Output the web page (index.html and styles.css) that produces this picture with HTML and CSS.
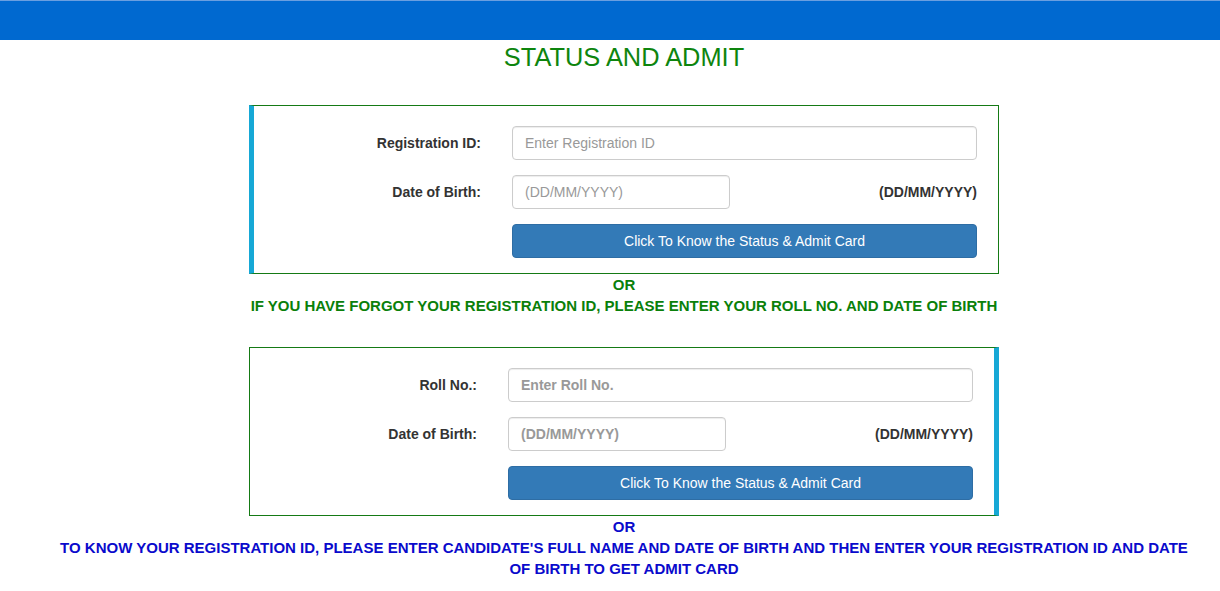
FILE: index.html
```html
<!DOCTYPE html>
<html>
<head>
<meta charset="utf-8">
<title>Status and Admit</title>
<link rel="stylesheet" href="styles.css">
</head>
<body>
<header class="topbar"></header>
<main class="container">
  <h1 class="title">STATUS AND ADMIT</h1>

  <section class="panel panel-left">
    <div class="row">
      <label class="label">Registration ID:</label>
      <input class="field" type="text" placeholder="Enter Registration ID">
    </div>
    <div class="row">
      <label class="label">Date of Birth:</label>
      <div class="date-line">
        <input class="field date" type="text" placeholder="(DD/MM/YYYY)">
        <span class="hint">(DD/MM/YYYY)</span>
      </div>
    </div>
    <div class="row">
      <span></span>
      <button class="btn">Click To Know the Status &amp; Admit Card</button>
    </div>
  </section>

  <div class="note green">
    <div>OR</div>
    <div>IF YOU HAVE FORGOT YOUR REGISTRATION ID, PLEASE ENTER YOUR ROLL NO. AND DATE OF BIRTH</div>
  </div>

  <section class="panel panel-right">
    <div class="row">
      <label class="label">Roll No.:</label>
      <input class="field bold-ph" type="text" placeholder="Enter Roll No.">
    </div>
    <div class="row">
      <label class="label">Date of Birth:</label>
      <div class="date-line">
        <input class="field date bold-ph" type="text" placeholder="(DD/MM/YYYY)">
        <span class="hint">(DD/MM/YYYY)</span>
      </div>
    </div>
    <div class="row">
      <span></span>
      <button class="btn">Click To Know the Status &amp; Admit Card</button>
    </div>
  </section>

  <div class="note blue">
    <div>OR</div>
    <div>TO KNOW YOUR REGISTRATION ID, PLEASE ENTER CANDIDATE'S FULL NAME AND DATE OF BIRTH AND THEN ENTER YOUR REGISTRATION ID AND DATE OF BIRTH TO GET ADMIT CARD</div>
  </div>
</main>
</body>
</html>
```

FILE: styles.css
```css
* { box-sizing: border-box; }
html, body { margin: 0; padding: 0; background: #fff; }
body {
  font-family: "Liberation Sans", Arial, sans-serif;
  font-size: 14px;
  color: #333;
  overflow: hidden;
}
.topbar {
  height: 40px;
  background: #0069d0;
  border-top: 1px solid #6a9fe0;
}
.container {
  width: 1170px;
  margin-left: 39px;
  padding: 0 15px;
}
.title {
  margin: 4px 0 0;
  font-size: 25.4px;
  line-height: 26px;
  font-weight: normal;
  color: #0e850e;
  text-align: center;
}
.panel {
  width: 750px;
  margin: 0 auto;
  border: 1px solid #157a15;
  padding: 20px 21px 15px 0;
  display: flex;
  flex-direction: column;
  gap: 15px;
}
.panel-left { margin-top: 35px; border-left: 5px solid #16a8d6; }
.panel-right { margin-top: 31px; border-right: 5px solid #16a8d6; }
.row {
  display: grid;
  grid-template-columns: 227px 465px;
  column-gap: 31px;
  align-items: center;
  height: 34px;
}
.label {
  text-align: right;
  font-weight: bold;
  color: #333;
}
.field {
  height: 34px;
  width: 100%;
  border: 1px solid #ccc;
  border-radius: 4px;
  padding: 6px 12px;
  font-family: inherit;
  font-size: 14px;
  color: #555;
  box-shadow: inset 0 1px 1px rgba(0,0,0,.075);
  outline: none;
}
.field::placeholder { color: #999; }
.bold-ph::placeholder { font-weight: bold; color: #999; }
.date-line {
  display: flex;
  justify-content: space-between;
  align-items: center;
}
.field.date { width: 218px; }
.hint { font-weight: bold; color: #333; }
.btn {
  height: 34px;
  width: 100%;
  background: #337ab7;
  border: 1px solid #2e6da4;
  border-radius: 4px;
  color: #fff;
  font-family: inherit;
  font-size: 14px;
  padding: 6px 12px;
}
.note {
  text-align: center;
  font-weight: bold;
  font-size: 15px;
  line-height: 21px;
}
.green { color: #0a800a; }
.blue { color: #0a0acc; }
```
